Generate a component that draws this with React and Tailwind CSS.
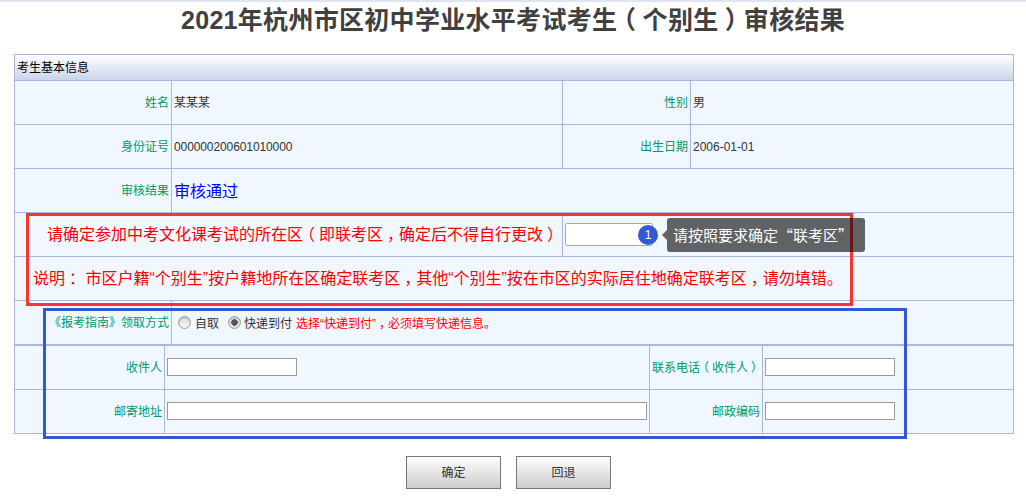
const labelCls = "flex items-center justify-end pr-[2px] text-[#009966] bg-[#f0f7ff] border-r border-[#a8b8dc]";
const cellCls = "flex items-center pl-[2px] text-[#333] bg-[#f0f7ff] border-r border-[#a8b8dc]";
const lastCls = "flex items-center pl-[2px] text-[#333] bg-[#f0f7ff]";

function Field({ className }) {
  return <input type="text" readOnly className={"block h-[18px] mb-[1px] bg-white border border-[#999] " + className} />;
}

function Radio({ checked }) {
  return (
    <input
      type="radio"
      readOnly
      checked={!!checked}
      className={
        "appearance-none block w-[13px] h-[13px] rounded-full border border-[#a0a0a0] shadow-[inset_0_1px_2px_rgba(0,0,0,0.2)] " +
        (checked
          ? "bg-[radial-gradient(circle,#555_0,#555_3px,#e4e4e4_3.5px)]"
          : "bg-[linear-gradient(#dcdcdc,#f6f6f6)]")
      }
    />
  );
}

/* full-width punctuation sits in the middle of its em box in the reference */
const P = ({ children }) => <span className="px-[0.25em] [font-feature-settings:'halt']">{children}</span>;

export default function App() {
  return (
    <div className="w-[1026px] h-[502px] relative overflow-hidden bg-white text-[12px] font-['Liberation_Sans','Noto_Sans_CJK_SC',sans-serif]">
      <div className="h-[2px] bg-[#dde5f3]" />
      <h1 className="h-[52px] text-center text-[25px] leading-[36px] tracking-[0.3px] font-bold text-[#404040]">
        2021年杭州市区初中学业水平考试考生<P>（</P>个别生<P>）</P>审核结果
      </h1>

      <div className="ml-[14px] w-[1000px] border border-[#a8b8dc]">
        <div className="h-[26px] pl-[2px] flex items-center text-black border-b border-[#a8b8dc] bg-[linear-gradient(#ffffff,#c9d5ea)]">
          考生基本信息
        </div>
        <div className="grid grid-cols-[157px_391px_128px_322px] grid-rows-[44px_44px_44px_44px_44px_43px] [&>*]:border-b [&>*]:border-[#a8b8dc]">
          <div className={labelCls}>姓名</div>
          <div className={cellCls}>某某某</div>
          <div className={labelCls}>性别</div>
          <div className={lastCls}>男</div>

          <div className={labelCls}>身份证号</div>
          <div className={cellCls + " tracking-[-0.1px]"}>000000200601010000</div>
          <div className={labelCls}>出生日期</div>
          <div className={lastCls}>2006-01-01</div>

          <div className={labelCls}>审核结果</div>
          <div className={lastCls + " col-span-3 pt-[3px] text-[16px] !text-[#0000ff]"}>审核通过</div>

          <div className={"col-span-2 flex items-center justify-end pr-[3px] bg-[#f0f7ff] border-r border-[#a8b8dc] text-[16px] text-[#ff0000] whitespace-pre"}>
            <span>请确定参加中考文化课考试的所在区<P>（</P>即联考区<P>，</P>确定后不得自行更改<P>）</P></span>
          </div>
          <div className="col-span-2 flex items-center pl-[2px] bg-[#f0f7ff]">
            <input type="text" readOnly className="block w-[88px] h-[23px] bg-white border border-[#aaa] rounded-[2px]" />
          </div>

          <div className="col-span-4 flex items-center pl-[18px] bg-[#f0f7ff] text-[16px] text-[#ff0000] whitespace-pre">
            <span>说明<P>：</P> 市区户籍“个别生”按户籍地所在区确定联考区<P>，</P>其他“个别生”按在市区的实际居住地确定联考区<P>，</P>请勿填错。</span>
          </div>

          <div className={labelCls + " !border-b-0"}>《报考指南》领取方式</div>
          <div className={lastCls + " col-span-3 !border-b-0 pl-[6px]"}>
            <Radio />
            <span className="ml-[4px] pt-[3px]">自取</span>
            <span className="ml-[9px]"><Radio checked /></span>
            <span className="ml-[3px] pt-[3px]">快递到付</span>
            <span className="ml-[4px] pt-[3px] text-[#ff0000]">选择“快递到付”<P>，</P>必须填写快递信息。</span>
          </div>
        </div>
      </div>

      <div className="ml-[14px] w-[1000px] border border-[#a8b8dc] grid grid-cols-[150px_485px_113px_250px] grid-rows-[44px_43px] [&>*:nth-child(-n+4)]:border-b [&>*:nth-child(-n+4)]:border-[#a8b8dc] h-[89px]">
        <div className={labelCls}>收件人</div>
        <div className={cellCls}><Field className="w-[130px]" /></div>
        <div className={labelCls}><span>联系电话<P>（</P>收件人<P>）</P></span></div>
        <div className={lastCls}><Field className="w-[130px]" /></div>

        <div className={labelCls}>邮寄地址</div>
        <div className={cellCls}><Field className="w-[480px]" /></div>
        <div className={labelCls}>邮政编码</div>
        <div className={lastCls}><Field className="w-[130px]" /></div>
      </div>

      <div className="mt-[22px] flex justify-center gap-[15px] pr-[9px]">
        <button className="w-[95px] h-[33px] border border-[#777] bg-[linear-gradient(#ffffff,#cccccc)] text-[#333] text-[12px]">确定</button>
        <button className="w-[95px] h-[33px] border border-[#777] bg-[linear-gradient(#ffffff,#cccccc)] text-[#333] text-[12px]">回退</button>
      </div>

      {/* annotations drawn over the page */}
      <div className="absolute left-[26px] top-[213px] w-[827px] h-[93px] border-[3px] border-[#ff3333]" />
      <div className="absolute left-[43px] top-[308px] w-[864px] h-[131px] border-[3px] border-[#3258d6]" />
      <div className="absolute left-[638px] top-[225px] w-[20px] h-[20px] rounded-full bg-[#3258d6] text-white text-[12px] flex items-center justify-center">1</div>
      <div className="absolute left-[667px] top-[218px] w-[198px] h-[34px] rounded-[3px] bg-[rgba(0,0,0,0.6)] text-white text-[15px] pl-[6px] flex items-center font-['Noto_Sans_CJK_SC',sans-serif]">
        <span className="absolute left-[-5px] top-[12px] w-0 h-0 border-y-[5px] border-y-transparent border-r-[5px] border-r-[rgba(0,0,0,0.6)]" />
        请按照要求确定“联考区”
      </div>
    </div>
  );
}
